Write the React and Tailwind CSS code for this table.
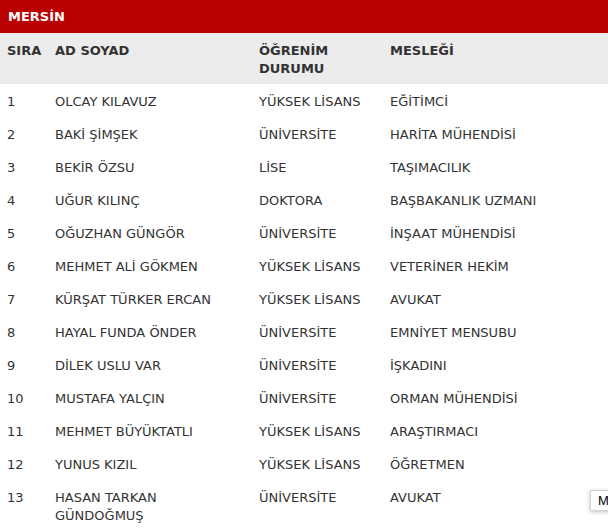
import React from "react";

const rows = [
  ["1", "OLCAY KILAVUZ", "YÜKSEK LİSANS", "EĞİTİMCİ"],
  ["2", "BAKİ ŞİMŞEK", "ÜNİVERSİTE", "HARİTA MÜHENDİSİ"],
  ["3", "BEKİR ÖZSU", "LİSE", "TAŞIMACILIK"],
  ["4", "UĞUR KILINÇ", "DOKTORA", "BAŞBAKANLIK UZMANI"],
  ["5", "OĞUZHAN GÜNGÖR", "ÜNİVERSİTE", "İNŞAAT MÜHENDİSİ"],
  ["6", "MEHMET ALİ GÖKMEN", "YÜKSEK LİSANS", "VETERİNER HEKİM"],
  ["7", "KÜRŞAT TÜRKER ERCAN", "YÜKSEK LİSANS", "AVUKAT"],
  ["8", "HAYAL FUNDA ÖNDER", "ÜNİVERSİTE", "EMNİYET MENSUBU"],
  ["9", "DİLEK USLU VAR", "ÜNİVERSİTE", "İŞKADINI"],
  ["10", "MUSTAFA YALÇIN", "ÜNİVERSİTE", "ORMAN MÜHENDİSİ"],
  ["11", "MEHMET BÜYÜKTATLI", "YÜKSEK LİSANS", "ARAŞTIRMACI"],
  ["12", "YUNUS KIZIL", "YÜKSEK LİSANS", "ÖĞRETMEN"],
  ["13", ["HASAN TARKAN", "GÜNDOĞMUŞ"], "ÜNİVERSİTE", "AVUKAT"],
];

const grid = "grid grid-cols-[48px_204px_131px_1fr]";

const Cell = ({ children, bold }) => (
  <div className={`pl-[7px] pt-[9px] pb-[6px] leading-[18px] ${bold ? "font-bold" : ""}`}>
    {Array.isArray(children)
      ? children.map((c) => (
          <div key={c}>{c}</div>
        ))
      : children}
  </div>
);

export default function App() {
  return (
    <div
      className="relative w-[608px] h-[532px] overflow-hidden bg-white text-[13px] text-[#333]"
      style={{ fontFamily: "'DejaVu Sans', sans-serif" }}
    >
      <div className="h-[33px] bg-[#bb0000] flex items-center pl-2 text-white font-bold">
        MERSİN
      </div>
      <div className={`${grid} bg-[#ececec] h-[51px]`}>
        <Cell bold>SIRA</Cell>
        <Cell bold>AD SOYAD</Cell>
        <Cell bold>{["ÖĞRENİM", "DURUMU"]}</Cell>
        <Cell bold>MESLEĞİ</Cell>
      </div>
      {rows.map((r) => (
        <div key={r[0]} className={grid}>
          <Cell>{r[0]}</Cell>
          <Cell>{r[1]}</Cell>
          <Cell>{r[2]}</Cell>
          <Cell>{r[3]}</Cell>
        </div>
      ))}
      <div
        className="absolute left-[590px] top-[490px] w-[30px] h-[21px] pl-[7px] bg-white border border-[#d4d4d4] shadow-[0_1px_4px_rgba(0,0,0,0.25)] text-black text-[13px] leading-[19px]"
        style={{ fontFamily: "'Liberation Sans', sans-serif" }}
      >
        M
      </div>
    </div>
  );
}
